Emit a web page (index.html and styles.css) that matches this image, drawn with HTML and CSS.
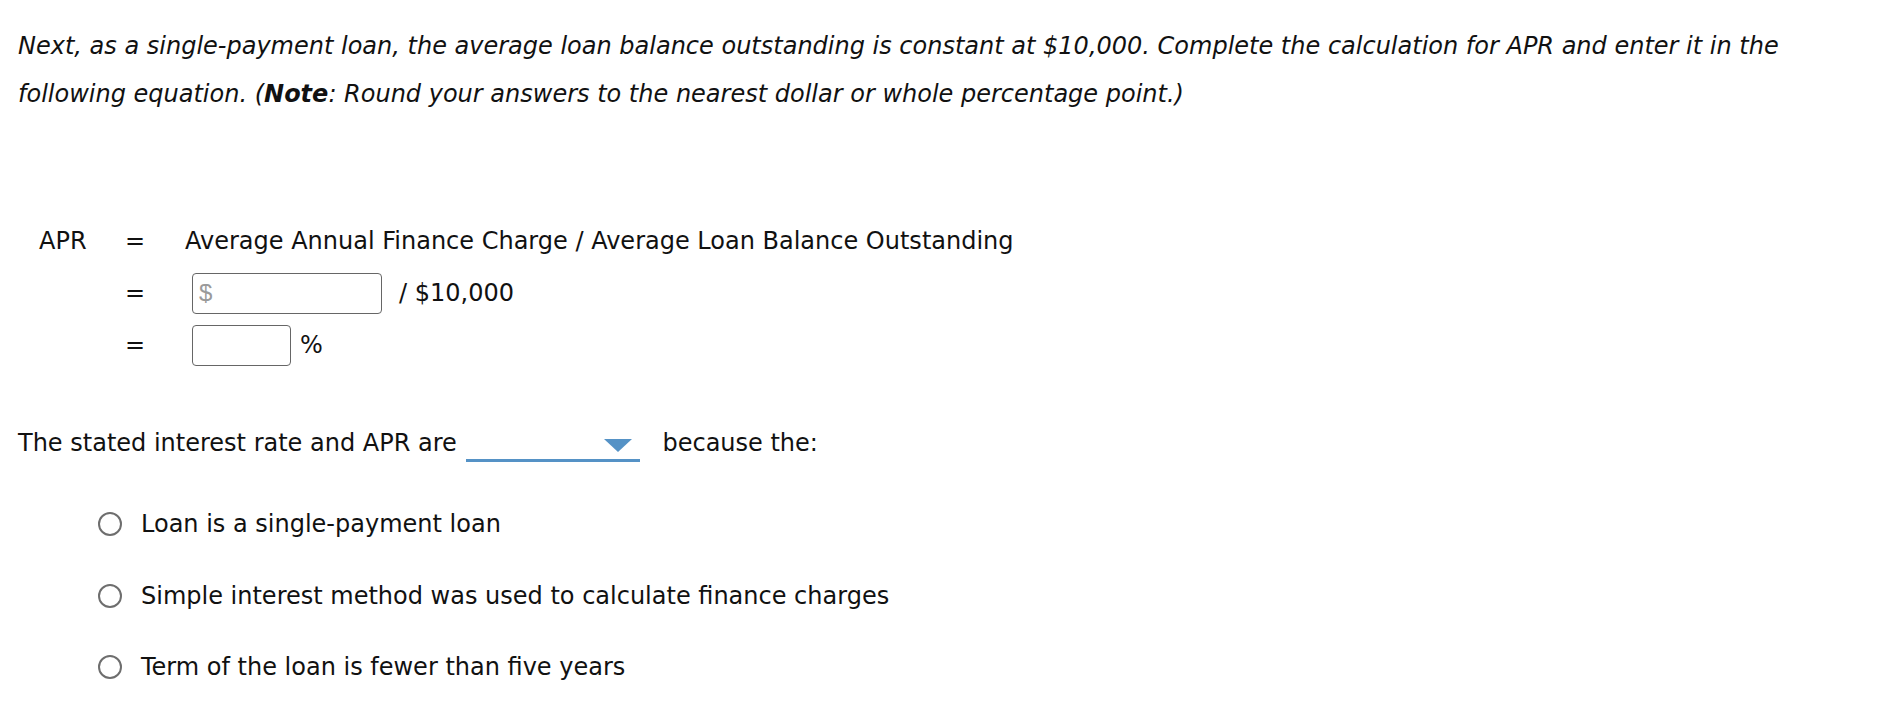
FILE: index.html
```html
<!DOCTYPE html>
<html lang="en">
<head>
<meta charset="utf-8">
<title>APR calculation</title>
<link rel="stylesheet" href="styles.css">
</head>
<body>
<div class="page">
  <p class="intro">Next, as a single-payment loan, the average loan balance outstanding is constant at $10,000. Complete the calculation for APR and enter it in the following equation. (<b>Note</b>: Round your answers to the nearest dollar or whole percentage point.)</p>

  <div class="eq">
    <div class="eq-label">APR</div>
    <div class="eq-sign">=</div>
    <div class="eq-body">Average Annual Finance Charge / Average Loan Balance Outstanding</div>

    <div class="eq-label"></div>
    <div class="eq-sign">=</div>
    <div class="eq-body">
      <span class="field field-wide"><span class="ph">$</span></span>
      <span class="after-wide">/ $10,000</span>
    </div>

    <div class="eq-label"></div>
    <div class="eq-sign">=</div>
    <div class="eq-body">
      <span class="field field-narrow"></span>
      <span class="after-narrow">%</span>
    </div>
  </div>

  <div class="sentence">The stated interest rate and APR are <span class="select"><svg class="caret" viewBox="0 0 28 13" width="28" height="13"><polygon points="0,0 28,0 14,13" fill="#5592c6"/></svg></span><span class="after-select">because the:</span></div>

  <ul class="options">
    <li class="option"><span class="radio"></span><span>Loan is a single-payment loan</span></li>
    <li class="option"><span class="radio"></span><span>Simple interest method was used to calculate finance charges</span></li>
    <li class="option"><span class="radio"></span><span>Term of the loan is fewer than five years</span></li>
  </ul>
</div>
</body>
</html>
```
FILE: styles.css
```css
html, body {
  margin: 0;
  padding: 0;
  background: #ffffff;
}

body {
  margin: 8px;
  font-family: "DejaVu Sans", Verdana, sans-serif;
  font-size: 24px;
  color: #111111;
}

.page {
  padding: 14px 0 0 10px;
}

.intro {
  margin: 0;
  font-family: "DejaVu Sans", Verdana, sans-serif;
  font-style: italic;
  line-height: 48px;
}

.intro b {
  font-weight: bold;
}

.eq {
  display: grid;
  grid-template-columns: 86px 60px auto;
  grid-auto-rows: 44px;
  row-gap: 8px;
  margin: 101px 0 0 21px;
  align-items: center;
}

.eq-body {
  display: flex;
  align-items: center;
}

.field {
  display: inline-flex;
  align-items: center;
  box-sizing: border-box;
  height: 41px;
  margin-left: 7px;
  border: 1.5px solid #666666;
  border-radius: 4px;
  background: #fff;
}

.field-wide {
  width: 190px;
}

.field-narrow {
  width: 99px;
}

.ph {
  font-family: "Liberation Sans", Arial, sans-serif;
  color: #9a9a9a;
  padding-left: 6px;
  font-size: 24px;
}

.after-wide {
  margin-left: 17px;
}

.after-narrow {
  margin-left: 9px;
}

.sentence {
  margin-top: 52px;
  line-height: 48px;
  white-space: nowrap;
}

.select {
  position: relative;
  display: inline-block;
  box-sizing: border-box;
  width: 174px;
  height: 28px;
  margin-left: 2px;
  margin-bottom: -11px;
  border-bottom: 3px solid #5592c6;
  vertical-align: baseline;
}

.caret {
  position: absolute;
  right: 8px;
  top: 5px;
  display: block;
}

.after-select {
  margin-left: 22px;
}

.options {
  list-style: none;
  margin: 33px 0 0 0;
  padding: 0 0 0 80px;
  display: flex;
  flex-direction: column;
  gap: 23.5px;
}

.option {
  display: flex;
  align-items: center;
  height: 48px;
  gap: 19px;
}

.radio {
  box-sizing: border-box;
  width: 24px;
  height: 24px;
  border: 2px solid #6e6e6e;
  border-radius: 50%;
  flex: none;
}
```
